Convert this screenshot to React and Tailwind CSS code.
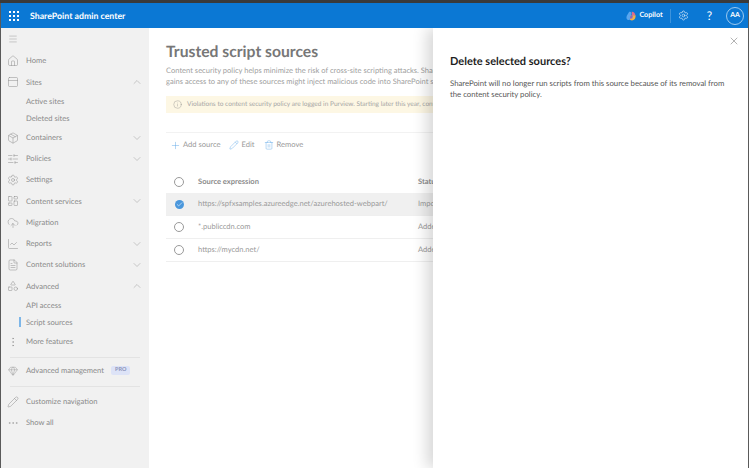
import React from "react";
import { Home, PanelTop, Package, SlidersHorizontal, Settings, LayoutDashboard, CloudUpload, ChartLine, FileText, Shapes, ChevronDown, ChevronUp, EllipsisVertical, Gem, Pencil, Ellipsis, Plus, Trash2, Info, X, Check, Menu } from "lucide-react";

function NavRow({ icon: Icon, label, chev }) {
  return (
    <div className="flex h-[21.25px] items-center pl-[3px] pr-[6px] text-[#8a8a8a]">
      <span className="flex w-[18px] shrink-0 justify-center"><Icon size={12} strokeWidth={1} className="text-[#8c8c8c]" /></span>
      <span className="ml-[4px] flex-1 text-[7.6px]">{label}</span>
      {chev === "up" && <ChevronUp size={12} strokeWidth={1} className="text-[#9a9a9a]" />}
      {chev === "down" && <ChevronDown size={12} strokeWidth={1} className="text-[#9a9a9a]" />}
    </div>
  );
}

function SubRow({ label, active }) {
  return (
    <div className="relative flex h-[17px] items-center pl-[25px] text-[7.6px] text-[#8a8a8a]">
      {active && <span className="absolute left-[18px] top-[3px] h-[10px] w-[2px] bg-[#7db6e8]" />}
      {label}
    </div>
  );
}

function Radio({ checked }) {
  return checked ? (
    <span className="flex h-[9px] w-[9px] items-center justify-center rounded-full bg-[#4a97dc]">
      <Check size={7} strokeWidth={2} className="text-white" />
    </span>
  ) : (
    <span className="h-[10px] w-[10px] rounded-full border border-[#9a9a9a]" />
  );
}

function Row({ url, status, checked }) {
  return (
    <div className={`flex h-[23px] items-center whitespace-nowrap border-b border-[#efefef] ${checked ? "bg-[#f0f0f0]" : ""}`}>
      <span className="flex w-[26px] shrink-0 justify-center"><Radio checked={checked} /></span>
      <span className="ml-[6px] w-[220px] shrink-0 text-[7.55px] text-[#9a9a9a]">{url}</span>
      <span className="text-[7.55px] text-[#9a9a9a]">{status}</span>
    </div>
  );
}

function CopilotMark() {
  return (
    <svg width="10" height="10" viewBox="0 0 10 10">
      <path d="M3.2 0.8C5 0.3 5.8 1.4 5.4 3L4.4 7.4C4 9 2.6 9.4 1.5 8.8C0.3 8 0.2 6.4 0.8 4.8Z" fill="#5aa6ee" />
      <path d="M5.8 0.8C7.6 0.6 9 2 9.4 4.2L6 5.2Z" fill="#e06a8e" />
      <path d="M5 4.6L9.6 4.2C9.8 7 8.4 9.4 6 9.4C4.4 9.4 3.8 8.6 4 8Z" fill="#f2b04a" />
      <path d="M4.6 4.8L7 4.6L6.2 7.6L3.8 7.6Z" fill="#8a63c9" />
    </svg>
  );
}

export default function App() {
  return (
    <div className="relative h-[474px] w-[749px] overflow-hidden bg-white font-['Lato','Open_Sans',sans-serif] [text-rendering:geometricPrecision]">
      <div className="h-[3px] bg-[#3a3a3a]" />
      <div className="flex h-[465px] flex-col border-x border-[#5a5a5a]">
        <header className="flex h-[25px] shrink-0 items-center bg-[#0b78d4] pl-[8px] pr-[4px] text-white">
          <svg width="10" height="10" viewBox="0 0 10 10" fill="white">
            {[0, 4, 8].flatMap((x) => [0, 4, 8].map((y) => <rect key={`${x}-${y}`} x={x} y={y} width="2" height="2" />))}
          </svg>
          <span className="ml-[11px] flex-1 text-[8.75px] font-bold">SharePoint admin center</span>
          <CopilotMark />
          <span className="ml-[3px] text-[7.2px] font-bold">Copilot</span>
          <span className="ml-[7px] h-[14px] w-px bg-[#3d93dc]" />
          <Settings size={11} strokeWidth={1.2} className="ml-[7px]" />
          <span className="ml-[18px] text-[12px] leading-none">?</span>
          <span className="ml-[14px] flex h-[18px] w-[18px] items-center justify-center rounded-full border border-[#9cc9ef] text-[7px] font-bold">AA</span>
        </header>

        <div className="flex min-h-0 flex-1">
          <nav className="flex w-[148px] shrink-0 flex-col bg-[#f1f1f1] pt-[4.5px]">
            <div className="mb-[5px] flex h-[13px] items-center pl-[7px]"><Menu size={10} strokeWidth={1} className="text-[#8c8c8c]" /></div>
            <NavRow icon={Home} label="Home" />
            <NavRow icon={PanelTop} label="Sites" chev="up" />
            <SubRow label="Active sites" />
            <SubRow label="Deleted sites" />
            <NavRow icon={Package} label="Containers" chev="down" />
            <NavRow icon={SlidersHorizontal} label="Policies" chev="down" />
            <NavRow icon={Settings} label="Settings" />
            <NavRow icon={LayoutDashboard} label="Content services" chev="down" />
            <NavRow icon={CloudUpload} label="Migration" />
            <NavRow icon={ChartLine} label="Reports" chev="down" />
            <NavRow icon={FileText} label="Content solutions" chev="down" />
            <NavRow icon={Shapes} label="Advanced" chev="up" />
            <SubRow label="API access" />
            <SubRow label="Script sources" active />
            <NavRow icon={EllipsisVertical} label="More features" />
            <div className="mx-[9px] mb-[5px] mt-[5px] border-t border-[#e3e3e3]" />
            <div className="flex h-[15px] items-center pl-[3px] text-[7.6px] text-[#8a8a8a]">
              <span className="flex w-[18px] shrink-0 justify-center"><Gem size={10} strokeWidth={1} className="text-[#8c8c8c]" /></span>
              <span className="ml-[4px]">Advanced management</span>
              <span className="ml-[7px] rounded-[2px] bg-[#dde3f7] px-[4px] text-[5.5px] font-bold leading-[9px] text-[#8c93b8]">PRO</span>
            </div>
            <div className="mx-[9px] mb-[4px] mt-[8px] border-t border-[#e3e3e3]" />
            <NavRow icon={Pencil} label="Customize navigation" />
            <NavRow icon={Ellipsis} label="Show all" />
          </nav>

          <main className="w-[284px] shrink-0 overflow-hidden pl-[17px] pt-[15px]">
            <h1 className="whitespace-nowrap text-[15.7px] font-bold leading-[18px] text-[#777777]">Trusted script sources</h1>
            <div className="mt-[5px] whitespace-nowrap text-[7.55px] leading-[10.5px] text-[#a0a0a0]">
              <p>Content security policy helps minimize the risk of cross-site scripting attacks. SharePoint only runs scripts</p>
              <p>gains access to any of these sources might inject malicious code into SharePoint sites and pages.</p>
            </div>
            <div className="mt-[9px] flex h-[17px] items-center whitespace-nowrap bg-[#fdf7e4] pl-[7px] text-[6.55px] text-[#a5a5a5]">
              <Info size={9} strokeWidth={1} className="mr-[5px] shrink-0 text-[#8a8a8a]" />
              Violations to content security policy are logged in Purview. Starting later this year, content security policy will be enforced
            </div>
            <div className="mt-[19px] flex h-[24px] items-center border-t border-[#f2f2f2] pl-[4px] pt-[1px] text-[7.6px] text-[#9a9a9a]">
              <Plus size={11} strokeWidth={1} className="text-[#5ba4e6]" />
              <span className="ml-[2px]">Add source</span>
              <Pencil size={10} strokeWidth={1} className="ml-[8px] text-[#5ba4e6]" />
              <span className="ml-[3px]">Edit</span>
              <Trash2 size={10} strokeWidth={1} className="ml-[9px] text-[#5ba4e6]" />
              <span className="ml-[3px]">Remove</span>
            </div>
            <div className="mt-[15px] flex h-[22px] items-center whitespace-nowrap">
              <span className="flex w-[26px] shrink-0 justify-center"><Radio /></span>
              <span className="ml-[6px] w-[220px] shrink-0 text-[7.55px] font-bold text-[#8c8c8c]">Source expression</span>
              <span className="text-[7.55px] font-bold text-[#8c8c8c]">Status</span>
            </div>
            <Row checked url="https://spfxsamples.azureedge.net/azurehosted-webpart/" status="Imported" />
            <Row url="*.publiccdn.com" status="Added" />
            <Row url="https://mycdn.net/" status="Added" />
          </main>
        </div>
      </div>

      <aside className="absolute bottom-[6px] right-[1px] top-[28px] w-[315px] bg-white px-[17px] shadow-[-6px_0_14px_rgba(0,0,0,0.16)] [clip-path:inset(0_0_0_-30px)]">
        <div className="flex justify-end pt-[7px]">
          <X size={12} strokeWidth={1} className="mr-[-9px] text-[#666666]" />
        </div>
        <h2 className="mt-[8px] text-[11px] font-bold leading-[14px] text-[#1f1f1f]">Delete selected sources?</h2>
        <p className="mt-[9px] text-[7.75px] leading-[10.5px] text-[#555555]">SharePoint will no longer run scripts from this source because of its removal from the content security policy.</p>
      </aside>
    </div>
  );
}
